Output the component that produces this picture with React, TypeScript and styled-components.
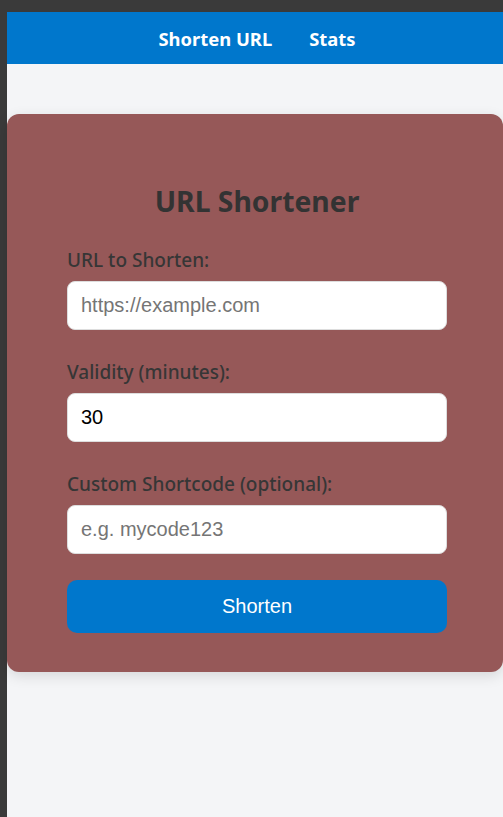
import React from "react";
import styled, { createGlobalStyle } from "styled-components";

const GlobalStyle = createGlobalStyle`
  html, body {
    margin: 0;
    padding: 0;
  }
  body {
    background: #3a3a3a;
    padding: 12px 0 0 7px;
    font-family: "Noto Sans", "Open Sans", sans-serif;
  }
  * { box-sizing: border-box; }
`;

const Page = styled.div`
  background: #f4f5f7;
  min-height: 805px;
`;

const NavBar = styled.nav`
  height: 52px;
  background: #0077cc;
  display: flex;
  align-items: center;
  justify-content: center;
  gap: 37px;
  padding-left: 4px;
`;

const NavLink = styled.a`
  color: #ffffff;
  font-family: "Noto Sans", sans-serif;
  font-weight: 700;
  font-size: 18.4px;
  text-decoration: none;
  cursor: pointer;
`;

const Main = styled.main`
  padding-top: 50px;
`;

const Card = styled.section`
  background: #965858;
  border-radius: 12px;
  padding: 69px 56px 39px 60px;
  box-shadow: 0 4px 14px rgba(0, 0, 0, 0.12);
`;

const Title = styled.h2`
  margin: 0 0 29px;
  text-align: center;
  font-family: "Noto Sans", sans-serif;
  font-size: 28.3px;
  line-height: 36px;
  font-weight: 700;
  color: #333333;
`;

const Form = styled.form`
  display: flex;
  flex-direction: column;
`;

const Field = styled.div<{ $spacing: number }>`
  display: flex;
  flex-direction: column;
  margin-bottom: ${(p) => p.$spacing}px;
`;

const Label = styled.label`
  font-family: "Noto Sans", sans-serif;
  font-size: 19px;
  font-weight: 500;
  line-height: 24px;
  color: #363636;
  margin-bottom: 9px;
`;

const Input = styled.input`
  height: 49px;
  width: 100%;
  border: 1px solid #dddddd;
  border-radius: 8px;
  background: #ffffff;
  padding: 0 13px;
  font-family: "Liberation Sans", Arial, sans-serif;
  font-size: 20px;
  color: #000000;
  outline: none;

  &::placeholder {
    color: #757575;
  }
`;

const SubmitButton = styled.button`
  height: 53px;
  width: 100%;
  border: none;
  border-radius: 10px;
  background: #0077cc;
  color: #ffffff;
  font-family: "Liberation Sans", Arial, sans-serif;
  font-size: 20px;
  cursor: pointer;
`;

export default function App() {
  return (
    <>
      <GlobalStyle />
      <Page>
        <NavBar>
          <NavLink>Shorten URL</NavLink>
          <NavLink>Stats</NavLink>
        </NavBar>
        <Main>
          <Card>
            <Title>URL Shortener</Title>
            <Form onSubmit={(e) => e.preventDefault()}>
              <Field $spacing={30}>
                <Label htmlFor="url">URL to Shorten:</Label>
                <Input id="url" placeholder="https://example.com" />
              </Field>
              <Field $spacing={30}>
                <Label htmlFor="validity">Validity (minutes):</Label>
                <Input id="validity" defaultValue="30" />
              </Field>
              <Field $spacing={26}>
                <Label htmlFor="code">Custom Shortcode (optional):</Label>
                <Input id="code" placeholder="e.g. mycode123" />
              </Field>
              <SubmitButton type="submit">Shorten</SubmitButton>
            </Form>
          </Card>
        </Main>
      </Page>
    </>
  );
}
